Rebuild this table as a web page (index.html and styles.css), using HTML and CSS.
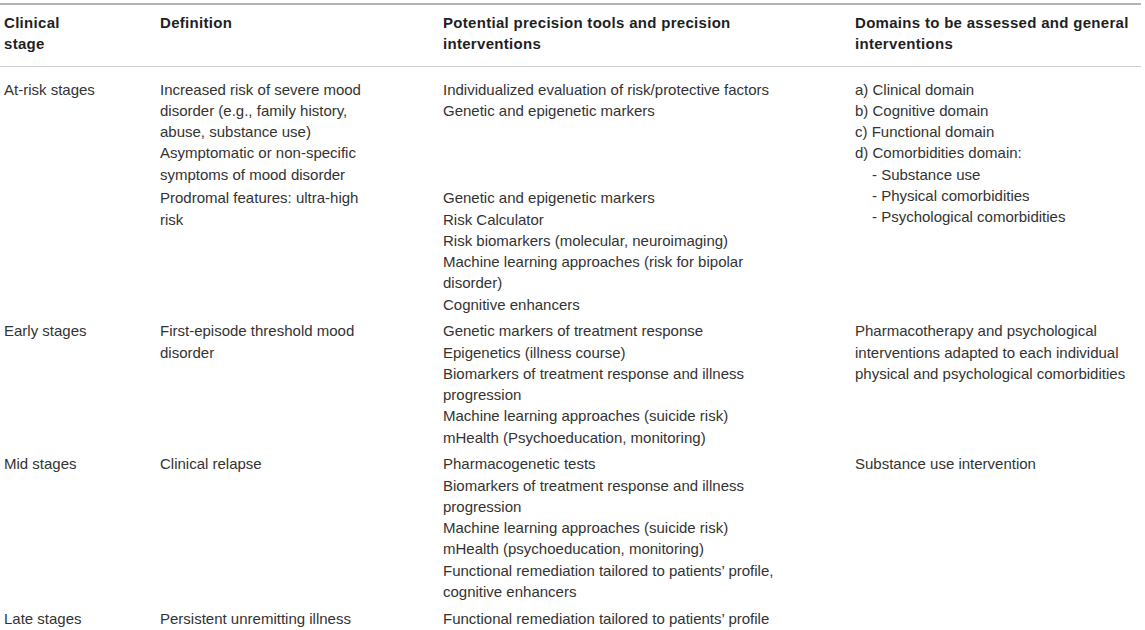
FILE: index.html
```html
<!DOCTYPE html>
<html lang="en">
<head>
<meta charset="utf-8">
<title>Clinical staging table</title>
<link rel="stylesheet" href="styles.css">
</head>
<body>
<table class="stage-table">
  <colgroup>
    <col class="c1">
    <col class="c2">
    <col class="c3">
    <col class="c4">
  </colgroup>
  <thead>
    <tr>
      <th>Clinical<br>stage</th>
      <th>Definition</th>
      <th>Potential precision tools and precision<br>interventions</th>
      <th>Domains to be assessed and general<br>interventions</th>
    </tr>
  </thead>
  <tbody>
    <tr class="first">
      <td rowspan="2">At-risk stages</td>
      <td>Increased risk of severe mood<br>disorder (e.g., family history,<br>abuse, substance use)<br>Asymptomatic or non-specific<br>symptoms of mood disorder</td>
      <td>Individualized evaluation of risk/protective factors<br>Genetic and epigenetic markers</td>
      <td rowspan="2">a) Clinical domain<br>b) Cognitive domain<br>c) Functional domain<br>d) Comorbidities domain:
        <div class="sub-list">- Substance use<br>- Physical comorbidities<br>- Psychological comorbidities</div>
      </td>
    </tr>
    <tr class="sub">
      <td>Prodromal features: ultra-high<br>risk</td>
      <td>Genetic and epigenetic markers<br>Risk Calculator<br>Risk biomarkers (molecular, neuroimaging)<br>Machine learning approaches (risk for bipolar<br>disorder)<br>Cognitive enhancers</td>
    </tr>
    <tr>
      <td>Early stages</td>
      <td>First-episode threshold mood<br>disorder</td>
      <td>Genetic markers of treatment response<br>Epigenetics (illness course)<br>Biomarkers of treatment response and illness<br>progression<br>Machine learning approaches (suicide risk)<br>mHealth (Psychoeducation, monitoring)</td>
      <td>Pharmacotherapy and psychological<br>interventions adapted to each individual<br>physical and psychological comorbidities</td>
    </tr>
    <tr>
      <td>Mid stages</td>
      <td>Clinical relapse</td>
      <td>Pharmacogenetic tests<br>Biomarkers of treatment response and illness<br>progression<br>Machine learning approaches (suicide risk)<br>mHealth (psychoeducation, monitoring)<br>Functional remediation tailored to patients’ profile,<br>cognitive enhancers</td>
      <td>Substance use intervention</td>
    </tr>
    <tr>
      <td>Late stages</td>
      <td>Persistent unremitting illness</td>
      <td>Functional remediation tailored to patients’ profile</td>
      <td></td>
    </tr>
  </tbody>
</table>
</body>
</html>
```

FILE: styles.css
```css
html, body {
  margin: 0;
  padding: 0;
  background: #ffffff;
}

body {
  font-family: "Liberation Sans", Arial, sans-serif;
  font-size: 15px;
  color: #333333;
}

.stage-table {
  margin-top: 3px;
  width: 1141px;
  table-layout: fixed;
  border-collapse: collapse;
  border-top: 2px solid #b4b4b4;
}

.c1 { width: 156px; }
.c2 { width: 283px; }
.c3 { width: 412px; }
.c4 { width: 290px; }

.stage-table th,
.stage-table td {
  text-align: left;
  vertical-align: top;
  line-height: 21.25px;
  padding: 3px 4px 2.5px 4px;
  white-space: nowrap;
}

.stage-table th {
  font-weight: bold;
  color: #1f1f1f;
  letter-spacing: 0.3px;
  padding-top: 7px;
  padding-bottom: 11px;
  border-bottom: 1px solid #cfcfcf;
}

.stage-table tr.first td {
  padding-top: 12px;
}

.stage-table tr.sub td {
  padding-top: 0;
}

.sub-list {
  padding-left: 17px;
}
```
